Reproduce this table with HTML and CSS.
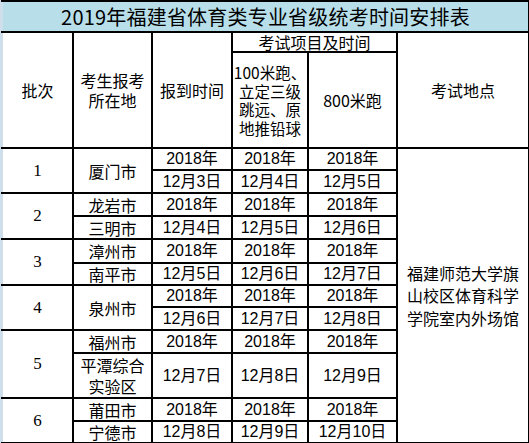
FILE: index.html
```html
<!DOCTYPE html>
<html lang="zh-CN">
<head>
<meta charset="utf-8">
<title>2019年福建省体育类专业省级统考时间安排表</title>
<link rel="stylesheet" href="styles.css">
</head>
<body>
<table class="sheet">
  <colgroup>
    <col class="c1"><col class="c2"><col class="c3"><col class="c4"><col class="c5"><col class="c6">
  </colgroup>
  <tr class="r-title"><td class="title" colspan="6">2019年福建省体育类专业省级统考时间安排表</td></tr>
  <tr class="r-h1">
    <td class="hd" rowspan="2">批次</td>
    <td class="hd" rowspan="2"><span class="wrap two">考生报考所在地</span></td>
    <td class="hd" rowspan="2">报到时间</td>
    <td class="hd" colspan="2">考试项目及时间</td>
    <td class="hd" rowspan="2">考试地点</td>
  </tr>
  <tr class="r-h2">
    <td class="hd"><span class="wrap multi">100米跑、立定三级跳远、原地推铅球</span></td>
    <td class="hd">800米跑</td>
  </tr>

  <tr class="r22">
    <td class="num" rowspan="2">1</td>
    <td class="city" rowspan="2">厦门市</td>
    <td class="yr">2018年</td><td class="yr">2018年</td><td class="yr">2018年</td>
    <td class="place" rowspan="12"><span class="wrap seven">福建师范大学旗山校区体育科学学院室内外场馆</span></td>
  </tr>
  <tr class="r23">
    <td class="dt">12月3日</td><td class="dt">12月4日</td><td class="dt">12月5日</td>
  </tr>

  <tr class="r23">
    <td class="num" rowspan="2">2</td>
    <td class="city">龙岩市</td>
    <td class="yr">2018年</td><td class="yr">2018年</td><td class="yr">2018年</td>
  </tr>
  <tr class="r23">
    <td class="city">三明市</td>
    <td class="dt">12月4日</td><td class="dt">12月5日</td><td class="dt">12月6日</td>
  </tr>

  <tr class="r24">
    <td class="num" rowspan="2">3</td>
    <td class="city">漳州市</td>
    <td class="yr">2018年</td><td class="yr">2018年</td><td class="yr">2018年</td>
  </tr>
  <tr class="r22">
    <td class="city">南平市</td>
    <td class="dt">12月5日</td><td class="dt">12月6日</td><td class="dt">12月7日</td>
  </tr>

  <tr class="r22">
    <td class="num" rowspan="2">4</td>
    <td class="city" rowspan="2">泉州市</td>
    <td class="yr">2018年</td><td class="yr">2018年</td><td class="yr">2018年</td>
  </tr>
  <tr class="r23">
    <td class="dt">12月6日</td><td class="dt">12月7日</td><td class="dt">12月8日</td>
  </tr>

  <tr class="r23">
    <td class="num" rowspan="2">5</td>
    <td class="city">福州市</td>
    <td class="yr">2018年</td><td class="yr">2018年</td><td class="yr">2018年</td>
  </tr>
  <tr class="r45">
    <td class="city"><span class="wrap pair">平潭综合实验区</span></td>
    <td class="dt">12月7日</td><td class="dt">12月8日</td><td class="dt">12月9日</td>
  </tr>

  <tr class="r23">
    <td class="num" rowspan="2">6</td>
    <td class="city">莆田市</td>
    <td class="yr">2018年</td><td class="yr">2018年</td><td class="yr">2018年</td>
  </tr>
  <tr class="r22">
    <td class="city">宁德市</td>
    <td class="dt">12月8日</td><td class="dt">12月9日</td><td class="dt">12月10日</td>
  </tr>
</table>
</body>
</html>
```

FILE: styles.css
```css
html, body {
  margin: 0;
  padding: 0;
  background: #ffffff;
}

body {
  width: 529px;
  height: 443px;
  overflow: hidden;
  border-left: 1px solid #cfdeeb;
  box-sizing: border-box;
}

.sheet {
  border-collapse: collapse;
  table-layout: fixed;
  width: 528px;
  font-family: "Liberation Sans", "Noto Sans CJK SC", sans-serif;
  font-size: 16px;
  color: #000;
}

.c1 { width: 71px; }
.c2 { width: 79px; }
.c3 { width: 80px; }
.c4 { width: 76px; }
.c5 { width: 89px; }
.c6 { width: 132px; }

.sheet td {
  padding: 0;
  text-align: center;
  vertical-align: middle;
  border: 2px solid #000;
  line-height: 18px;
  white-space: nowrap;
}

.sheet tr > td:first-child { border-left-color: #cfdeeb; }
.sheet tr.r-h2 > td:first-child,
.sheet tr:not(:has(.num)):not(.r-title):not(.r-h1) > td:first-child { border-left-color: #000; }

.r-title { height: 31px; }
.r-h1 { height: 20px; }
.r-h2 { height: 96px; }
.r22 { height: 22px; }
.r23 { height: 23px; }
.r24 { height: 24px; }
.r45 { height: 45px; }

.title {
  background: #b8dfe9;
  font-family: "Noto Sans CJK SC", sans-serif;
  font-size: 20px;
  line-height: 26px;
  border-top: 1px solid #d8dce8;
  letter-spacing: 0.2px;
}

.hd {
  font-family: "Noto Sans CJK SC", sans-serif;
  font-size: 16px;
}

.wrap {
  display: inline-block;
  white-space: normal;
  word-break: break-all;
  text-align: center;
  vertical-align: middle;
}

.two { width: 4.2em; line-height: 20px; }
.multi { width: 4.72em; font-size: 15.5px; line-height: 18.5px; }
.pair { width: 4.2em; line-height: 21px; }
.seven { width: 7.2em; line-height: 22.5px; }

.num {
  font-family: "Liberation Serif", "Noto Sans CJK SC", serif;
  font-size: 17px;
}

.city {
  font-family: "Noto Sans CJK SC", sans-serif;
  font-size: 16px;
  line-height: 21px;
}

.yr, .dt {
  font-family: "Liberation Sans", "Noto Sans CJK SC", sans-serif;
  font-size: 16px;
  line-height: 20px;
}

.yr { border-bottom: 1px solid #c8d0e0; }
.dt { border-top: 1px solid #c8d0e0; }

.place {
  font-family: "Noto Sans CJK SC", sans-serif;
  font-size: 16px;
}
```
